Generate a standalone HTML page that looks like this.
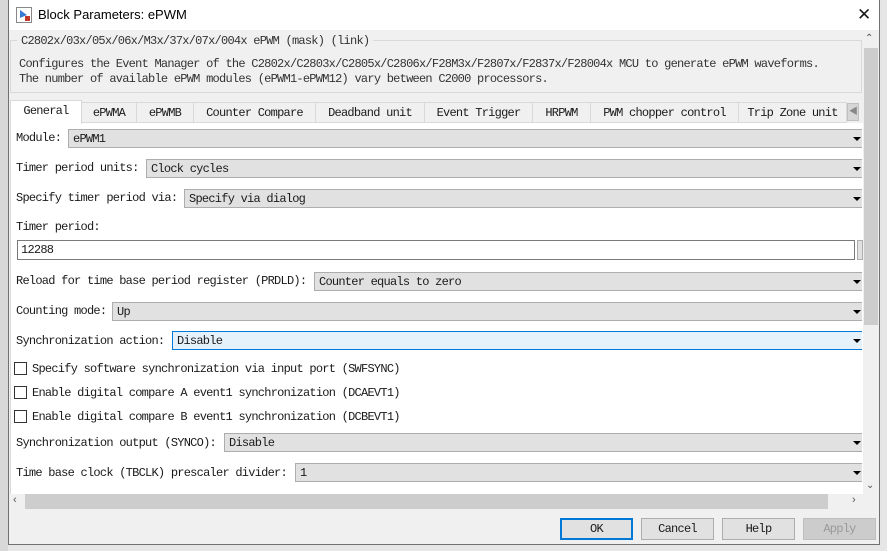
<!DOCTYPE html>
<html><head><meta charset="utf-8"><style>
*{box-sizing:border-box;margin:0;padding:0}
body{width:887px;height:551px;background:#e6e6e6;position:relative;overflow:hidden;font-family:"Liberation Mono","Noto Serif CJK SC",monospace;font-size:12px;letter-spacing:-0.75px;color:#1a1a1a}
.a{position:absolute}
.win{left:8px;top:0;width:872px;height:545px;background:#f0f0f0;border:1px solid #707070;border-top:none}
.dd{position:absolute;height:19px;background:#e1e1e1;border:1px solid #adadad;border-right:none;padding-left:4px;line-height:18px;right:1px}
.dd:after{content:"";position:absolute;right:1px;top:7px;border-left:4px solid transparent;border-right:4px solid transparent;border-top:4px solid #000}
.lb{position:absolute;left:7px;line-height:14px}
.cb{position:absolute;left:5px;width:13px;height:13px;border:1px solid #333;background:#fff}
.btn{position:absolute;top:518px;width:73px;height:22px;border:1px solid #adadad;background:#e1e1e1;text-align:center;line-height:20px}
.tab{position:absolute;top:102px;height:21px;border:1px solid #d9d9d9;border-left:none;text-align:center;line-height:21px;background:#f0f0f0}
</style></head><body>
<div class="a" style="left:0;top:0;width:8px;height:551px;background:#d8d8d8"></div>
<div class="a win"></div>
<div class="a" style="left:9px;top:0;width:870px;height:30px;background:#fff"></div>
<svg class="a" style="left:16px;top:7px" width="16" height="16"><rect x="0.5" y="0.5" width="15" height="15" fill="#fff" stroke="#888"/><path d="M4 3 L11 8 L4 11Z" fill="#3a7bd5"/><rect x="9" y="9" width="5" height="5" fill="#c0392b"/></svg>
<div class="a" style="left:38px;top:7px;font-family:'Liberation Sans',sans-serif;font-size:13px;letter-spacing:0;color:#000">Block Parameters: ePWM</div>
<div class="a" style="left:857px;top:5px;font-family:'Liberation Sans',sans-serif;font-size:17px;letter-spacing:0">✕</div>
<div class="a" style="left:10px;top:40px;width:852px;height:53px;border:1px solid #d9d9d9"></div>
<div class="a" style="left:17px;top:34px;background:#f0f0f0;padding:0 4px;color:#333">C2802x/03x/05x/06x/M3x/37x/07x/004x ePWM (mask) (link)</div>
<div class="a" style="left:19px;top:57px;line-height:15px;color:#333">Configures the Event Manager of the C2802x/C2803x/C2805x/C2806x/F28M3x/F2807x/F2837x/F28004x MCU to generate ePWM waveforms.<br>The number of available ePWM modules (ePWM1-ePWM12) vary between C2000 processors.</div>
<div class="a" style="left:10px;top:123px;width:853px;height:371px;background:#fff;border-left:1px solid #d9d9d9"></div>
<div class="tab" style="left:10px;top:100px;width:72px;height:24px;background:#fff;border-left:1px solid #d9d9d9;border-bottom:none">General</div>
<div class="tab" style="left:82px;width:55px">ePWMA</div>
<div class="tab" style="left:137px;width:57px">ePWMB</div>
<div class="tab" style="left:194px;width:122px">Counter Compare</div>
<div class="tab" style="left:316px;width:109px">Deadband unit</div>
<div class="tab" style="left:425px;width:108px">Event Trigger</div>
<div class="tab" style="left:533px;width:58px">HRPWM</div>
<div class="tab" style="left:591px;width:148px">PWM chopper control</div>
<div class="tab" style="left:739px;width:108px">Trip Zone unit</div>
<div class="a" style="left:847px;top:103px;width:12px;height:18px;background:#d6d6d6;border:1px solid #c0c0c0;font-size:9px;line-height:16px;color:#888;text-align:center">◀</div>
<div class="a" style="left:9px;top:123px;width:854px;height:371px">
<div class="lb" style="top:8px">Module:</div><div class="dd" style="left:59px;top:6px">ePWM1</div>
<div class="lb" style="top:38px">Timer period units:</div><div class="dd" style="left:137px;top:36px">Clock cycles</div>
<div class="lb" style="top:68px">Specify timer period via:</div><div class="dd" style="left:175px;top:66px">Specify via dialog</div>
<div class="lb" style="top:97px">Timer period:</div>
<div class="a" style="left:8px;top:117px;width:838px;height:20px;border:1px solid #7a7a7a;padding-left:3px;line-height:18px">12288</div>
<div class="a" style="left:848px;top:117px;width:6px;height:20px;border:1px solid #adadad;background:#e1e1e1"></div>
<div class="lb" style="top:151px">Reload for time base period register (PRDLD):</div><div class="dd" style="left:305px;top:149px">Counter equals to zero</div>
<div class="lb" style="top:181px">Counting mode:</div><div class="dd" style="left:103px;top:179px">Up</div>
<div class="lb" style="top:211px">Synchronization action:</div><div class="dd" style="left:163px;top:208px;background:#e5f1fb;border-color:#0078d7">Disable</div>
<div class="cb" style="top:239px"></div><div class="lb" style="left:23px;top:239px">Specify software synchronization via input port (SWFSYNC)</div>
<div class="cb" style="top:263px"></div><div class="lb" style="left:23px;top:263px">Enable digital compare A event1 synchronization (DCAEVT1)</div>
<div class="cb" style="top:287px"></div><div class="lb" style="left:23px;top:287px">Enable digital compare B event1 synchronization (DCBEVT1)</div>
<div class="lb" style="top:313px">Synchronization output (SYNCO):</div><div class="dd" style="left:215px;top:310px">Disable</div>
<div class="lb" style="top:343px">Time base clock (TBCLK) prescaler divider:</div><div class="dd" style="left:286px;top:340px">1</div>
</div>
<div class="a" style="left:10px;top:494px;width:853px;height:15px;background:#f0f0f0"></div>
<div class="a" style="left:25px;top:494px;width:803px;height:15px;background:#cdcdcd"></div>
<div class="a" style="left:13px;top:494px;font-size:11px;color:#555;font-family:'Liberation Sans',sans-serif">‹</div>
<div class="a" style="left:852px;top:494px;font-size:11px;color:#555;font-family:'Liberation Sans',sans-serif">›</div>
<div class="a" style="left:863px;top:30px;width:16px;height:463px;background:#f0f0f0"></div>
<div class="a" style="left:864px;top:48px;width:14px;height:277px;background:#cdcdcd"></div>
<div class="a" style="left:865px;top:33px;font-size:10px;color:#555;font-family:'Liberation Sans',sans-serif">⌃</div>
<div class="a" style="left:866px;top:480px;font-size:10px;color:#555;font-family:'Liberation Sans',sans-serif">⌄</div>
<div class="btn" style="left:560px;border:2px solid #0078d7;line-height:18px">OK</div>
<div class="btn" style="left:641px">Cancel</div>
<div class="btn" style="left:722px">Help</div>
<div class="btn" style="left:803px;background:#ccc;border-color:#bfbfbf;color:#999">Apply</div>
</body></html>
